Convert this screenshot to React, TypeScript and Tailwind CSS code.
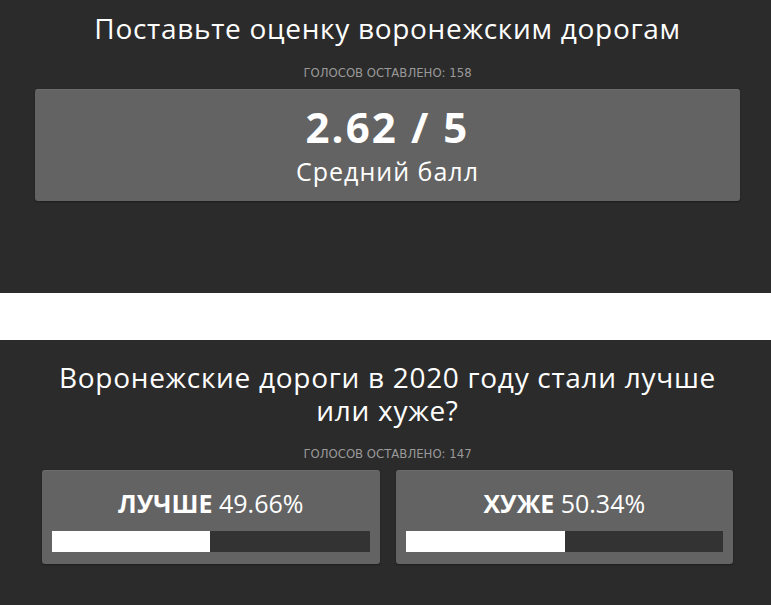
const polls = [
  { label: "ЛУЧШЕ", value: 49.66 },
  { label: "ХУЖЕ", value: 50.34 },
];

function VotesNote({ count }: { count: number }) {
  return (
    <p className="text-center font-['Liberation_Sans_Narrow','DejaVu_Sans_Condensed',sans-serif] text-[13px] leading-[14px] text-[#9a9a9a]">
      ГОЛОСОВ ОСТАВЛЕНО: {count}
    </p>
  );
}

export default function App() {
  return (
    <div className="min-h-[605px] bg-white" style={{ fontFamily: '"Open Sans", sans-serif' }}>
      <section className="h-[293px] bg-[#2b2b2b] pl-[35px] pr-[31px] pt-[9px]">
        <h1 className="text-center text-[28px] leading-[38px] tracking-[0.025em] text-white">
          Поставьте оценку воронежским дорогам
        </h1>
        <div className="mt-[19px]">
          <VotesNote count={158} />
        </div>
        <div className="mt-[9px] flex h-[112px] flex-col items-center rounded-[3px] border-t border-[#6c6c6c] bg-[#636363] pt-[10px] shadow-[0_1px_2px_rgba(0,0,0,0.35)]">
          <div className="text-[42px] font-bold leading-[54px] tracking-[0.05em] text-white">2.62 / 5</div>
          <div className="text-[25px] leading-[34px] tracking-[0.04em] text-white">Средний балл</div>
        </div>
      </section>

      <div className="h-[47px]" />

      <section className="h-[265px] bg-[#2b2b2b] pl-[35px] pr-[31px] pt-[21px]">
        <h2 className="text-center text-[28px] leading-[33px] tracking-[0.025em] text-white">
          Воронежские дороги в 2020 году стали лучше или хуже?
        </h2>
        <div className="mt-[20px]">
          <VotesNote count={147} />
        </div>
        <div className="mt-[9px] grid grid-cols-2 gap-4 px-[7px]">
          {polls.map((p) => (
            <div
              key={p.label}
              className="rounded-[3px] border-t border-[#6c6c6c] bg-[#636363] px-[10px] pb-[12px] pt-[16px] shadow-[0_1px_2px_rgba(0,0,0,0.35)]"
            >
              <div className="text-center text-[25px] leading-[32px] text-white">
                <span className="font-bold">{p.label}</span> {p.value.toFixed(2)}%
              </div>
              <div className="mt-[12px] h-[21px] bg-[#333333]">
                <div className="h-full bg-white" style={{ width: `${p.value}%` }} />
              </div>
            </div>
          ))}
        </div>
      </section>
    </div>
  );
}
